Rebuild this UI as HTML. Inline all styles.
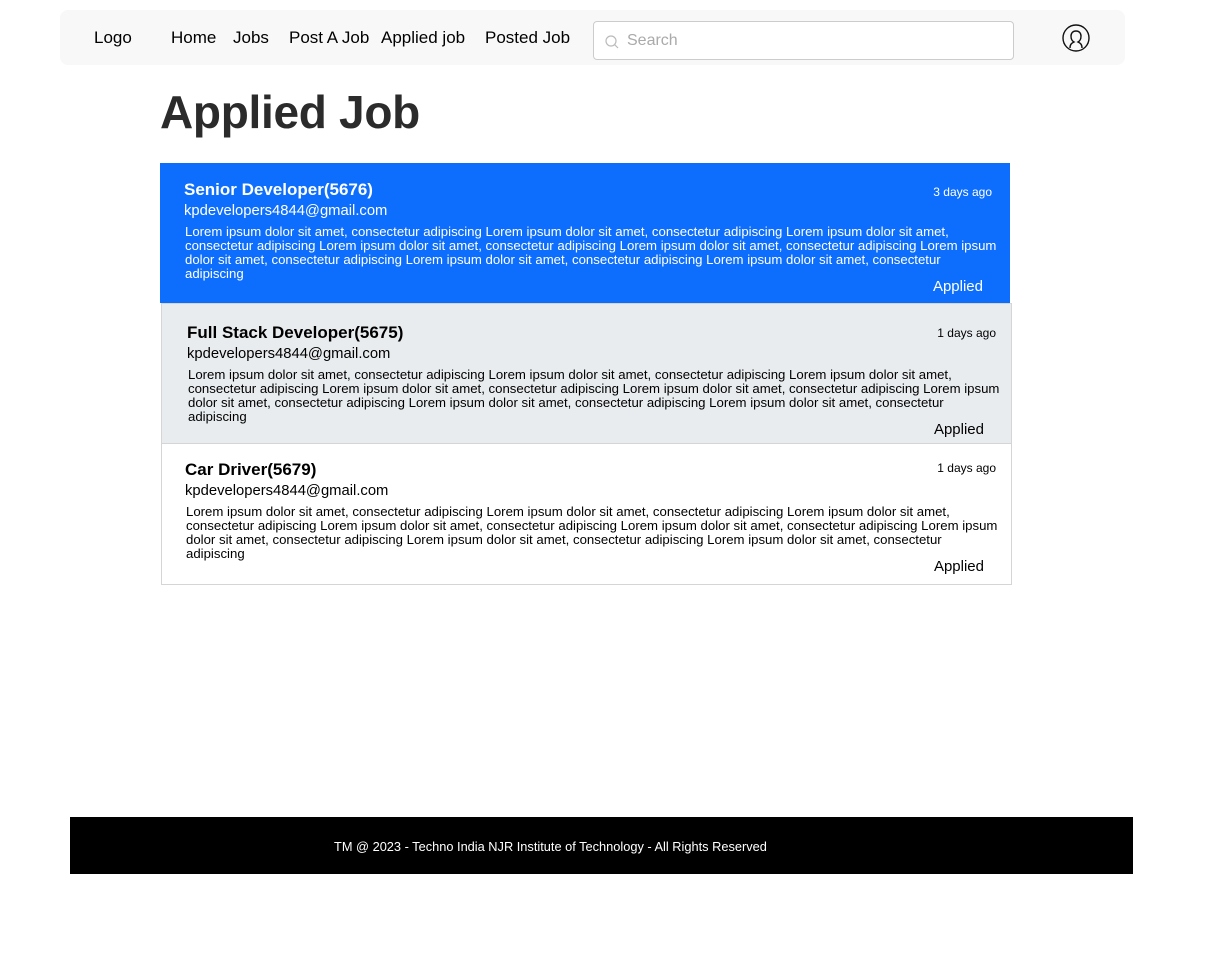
<!DOCTYPE html>
<html><head><meta charset="utf-8"><style>
body{margin:0;background:#fff;font-family:"Liberation Sans",sans-serif;color:#000;width:1221px;height:973px;position:relative;overflow:hidden}
.nav{position:absolute;left:60px;top:10px;width:1065px;height:55px;background:#f8f8f8;border-radius:8px}
.nav span{position:absolute;top:18px;font-size:17px;white-space:nowrap}
.search{position:absolute;left:593px;top:21px;width:419px;height:37px;border:1px solid #ccc;border-radius:4px;background:#fff}
.search span{position:absolute;left:33px;top:10px;color:#aaa;font-size:16px}
h1{position:absolute;left:160px;top:85px;margin:0;font-size:46px;font-weight:bold;color:#2b2b2b;letter-spacing:-0.3px}
.card{position:absolute;left:160px;width:850px;height:140px;box-sizing:border-box}
.card .t{position:absolute;left:24px;top:17px;font-size:17px;font-weight:bold;white-space:nowrap}
.card .e{position:absolute;left:24px;top:40px;font-size:14.8px;white-space:nowrap}
.card .d{position:absolute;left:25px;top:62px;font-size:13.2px;line-height:14px;white-space:nowrap}
.card .a{position:absolute;right:27px;top:22px;font-size:12px}
.card .s{position:absolute;right:27px;top:115px;font-size:15px}
.foot{position:absolute;left:70px;top:817px;width:1063px;height:57px;background:#000;color:#fff;font-size:12.8px}
.foot span{position:absolute;left:264px;top:22px}
</style></head><body>
<div class="nav">
<span style="left:34px">Logo</span>
<span style="left:111px">Home</span>
<span style="left:173px">Jobs</span>
<span style="left:229px">Post A Job</span>
<span style="left:321px">Applied job</span>
<span style="left:425px">Posted Job</span>
<svg style="position:absolute;left:1001px;top:13px" width="30" height="30" viewBox="0 0 30 30" fill="none" stroke="#111" stroke-width="1.4"><circle cx="15" cy="15" r="13"/><path d="M9 25c0-4 2-5 4-6c-2-1-3-3-3-6c0-3 2-5 5-5s5 2 5 5c0 3-1 5-3 6c2 1 4 2 4 6"/></svg>
</div>
<div class="search"><svg style="position:absolute;left:10px;top:12px" width="16" height="16" viewBox="0 0 16 16" fill="none" stroke="#bbb" stroke-width="1.2"><circle cx="7" cy="7" r="5"/><path d="M10.5 10.5L14 14"/></svg><span>Search</span></div>
<h1>Applied Job</h1>

<div class="card" style="top:163px;background:#0d6efd;color:#fff">
<div class="t">Senior Developer(5676)</div><div class="e">kpdevelopers4844@gmail.com</div>
<div class="d">Lorem ipsum dolor sit amet, consectetur adipiscing Lorem ipsum dolor sit amet, consectetur adipiscing Lorem ipsum dolor sit amet,<br>consectetur adipiscing Lorem ipsum dolor sit amet, consectetur adipiscing Lorem ipsum dolor sit amet, consectetur adipiscing Lorem ipsum<br>dolor sit amet, consectetur adipiscing Lorem ipsum dolor sit amet, consectetur adipiscing Lorem ipsum dolor sit amet, consectetur<br>adipiscing</div>
<div class="a" style="right:18px">3 days ago</div><div class="s">Applied</div></div>

<div class="card" style="top:303px;left:161px;width:851px;height:141px;background:#e9ecef;border:1px solid #d5d5d5">
<div class="t" style="left:25px;top:19px">Full Stack Developer(5675)</div><div class="e" style="left:25px;top:42px">kpdevelopers4844@gmail.com</div>
<div class="d" style="left:26px;top:64px">Lorem ipsum dolor sit amet, consectetur adipiscing Lorem ipsum dolor sit amet, consectetur adipiscing Lorem ipsum dolor sit amet,<br>consectetur adipiscing Lorem ipsum dolor sit amet, consectetur adipiscing Lorem ipsum dolor sit amet, consectetur adipiscing Lorem ipsum<br>dolor sit amet, consectetur adipiscing Lorem ipsum dolor sit amet, consectetur adipiscing Lorem ipsum dolor sit amet, consectetur<br>adipiscing</div>
<div class="a" style="right:15px">1 days ago</div><div class="s" style="top:117px">Applied</div></div>

<div class="card" style="top:444px;left:161px;width:851px;height:141px;background:#fff;border:1px solid #d5d5d5;border-top:none">
<div class="t" style="left:23px;top:16px">Car Driver(5679)</div><div class="e" style="left:23px;top:39px">kpdevelopers4844@gmail.com</div>
<div class="d" style="left:24px;top:61px">Lorem ipsum dolor sit amet, consectetur adipiscing Lorem ipsum dolor sit amet, consectetur adipiscing Lorem ipsum dolor sit amet,<br>consectetur adipiscing Lorem ipsum dolor sit amet, consectetur adipiscing Lorem ipsum dolor sit amet, consectetur adipiscing Lorem ipsum<br>dolor sit amet, consectetur adipiscing Lorem ipsum dolor sit amet, consectetur adipiscing Lorem ipsum dolor sit amet, consectetur<br>adipiscing</div>
<div class="a" style="right:15px;top:17px">1 days ago</div><div class="s" style="top:114px">Applied</div></div>

<div class="foot"><span>TM @ 2023 - Techno India NJR Institute of Technology - All Rights Reserved</span></div>
</body></html>
